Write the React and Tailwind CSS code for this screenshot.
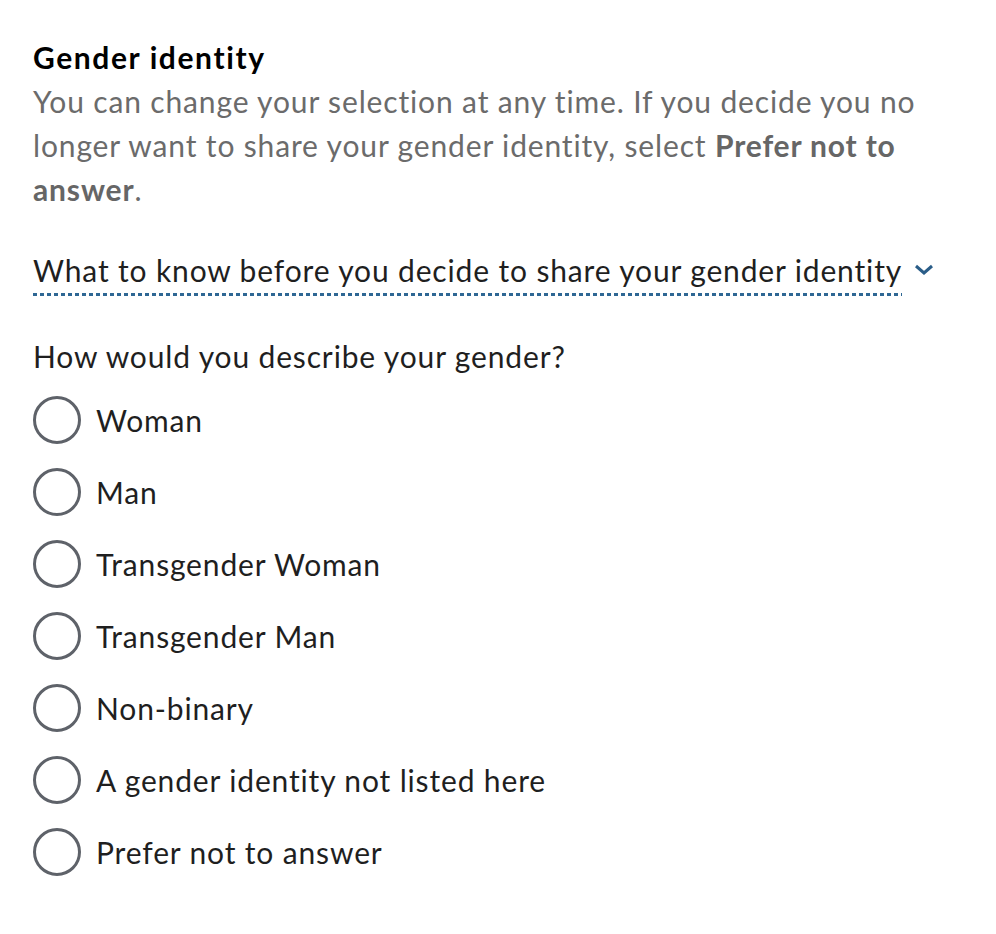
import { useState } from 'react'

const options = [
  'Woman',
  'Man',
  'Transgender Woman',
  'Transgender Man',
  'Non-binary',
  'A gender identity not listed here',
  'Prefer not to answer',
]

function Radio({ label, checked, onSelect }) {
  return (
    <label className="flex items-center h-[72px] cursor-pointer" onClick={onSelect}>
      <span className="w-[48px] h-[48px] rounded-full border-[3px] border-[#5e6269] flex items-center justify-center shrink-0">
        {checked && <span className="w-[26px] h-[26px] rounded-full bg-[#5e6269]" />}
      </span>
      <span className="ml-[15px] text-[30px] tracking-[0.85px] text-[#1f1f1f]">{label}</span>
    </label>
  )
}

export default function App() {
  const [selected, setSelected] = useState(null)

  return (
    <div className="min-h-screen bg-white px-[33px] pt-[35px] font-['Lato',sans-serif]">
      <h2 className="text-[30px] leading-[44px] tracking-[1.6px] font-bold text-black">Gender identity</h2>
      <p className="text-[30px] leading-[44px] tracking-[0.85px] text-[#6b6b6b]">
        You can change your selection at any time. If you decide you no longer want to share your gender identity, select{' '}
        <strong className="font-bold text-[#666]">Prefer not to answer</strong>.
      </p>

      <button type="button" className="mt-[37px] flex items-center text-left">
        <span className="text-[30px] leading-[44px] tracking-[0.85px] text-[#1f1f1f] pb-[4px] bg-[repeating-linear-gradient(90deg,#2e6794_0_4px,transparent_4px_7px)] bg-no-repeat bg-bottom bg-[length:100%_3px]">
          What to know before you decide to share your gender identity
        </span>
        <svg className="ml-[12px] mb-[4px]" width="20" height="12" viewBox="0 0 20 12" fill="none">
          <path d="M2 2l8 7 8-7" stroke="#2a5d88" strokeWidth="3" />
        </svg>
      </button>

      <fieldset className="mt-[38px]">
        <legend className="text-[30px] leading-[44px] tracking-[0.85px] text-[#1f1f1f]">How would you describe your gender?</legend>
        <div className="mt-[6px] flex flex-col">
          {options.map((o) => (
            <Radio key={o} label={o} checked={selected === o} onSelect={() => setSelected(o)} />
          ))}
        </div>
      </fieldset>
    </div>
  )
}
